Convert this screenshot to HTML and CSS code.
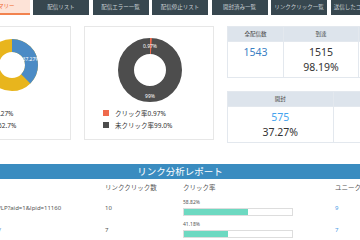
FILE: index.html
```html
<!DOCTYPE html>
<html lang="ja">

<head>
    <meta charset="UTF-8">
    <meta name="viewport" content="width=device-width, initial-scale=1.0">
    <title>配信レポート</title>
    <link rel="stylesheet" href="styles.css">
</head>

<body>
    <div class="page">
        <ul class="tabs">
            <li class="tab active">サマリー</li>
            <li class="tab">配信リスト</li>
            <li class="tab">配信エラー一覧</li>
            <li class="tab">配信停止リスト</li>
            <li class="tab">開封済み一覧</li>
            <li class="tab">リンククリック一覧</li>
            <li class="tab">送信したコンテンツ</li>
        </ul>

        <div class="overview">
            <!-- 開封率 -->
            <div class="card">
                <svg class="chart" width="128" height="80" viewBox="0 0 128 80">
                    <circle cx="70" cy="38" r="19.5" fill="none" stroke="#e8b51d" stroke-width="13" />
                    <circle cx="70" cy="38" r="19.5" fill="none" stroke="#4b8bc5" stroke-width="13"
                        stroke-dasharray="45.66 122.52" transform="rotate(-90 70 38)" />
                    <text class="chart-label" x="89" y="34">37.27%</text>
                </svg>
                <ul class="legend">
                    <li><span class="swatch" style="background:#4b8bc5"></span>開封率37.27%</li>
                    <li><span class="swatch" style="background:#e8b51d"></span>未開封率62.7%</li>
                </ul>
            </div>

            <!-- クリック率 -->
            <div class="card">
                <svg class="chart" width="128" height="80" viewBox="0 0 128 80">
                    <circle cx="65" cy="43" r="24" fill="none" stroke="#4d4d4d" stroke-width="16" />
                    <circle cx="65" cy="43" r="24" fill="none" stroke="#ef6a4c" stroke-width="16"
                        stroke-dasharray="1.46 150.8" transform="rotate(-90 65 43)" />
                    <text class="chart-label" x="65" y="21">0.97%</text>
                    <text class="chart-label" x="65" y="71">99%</text>
                </svg>
                <ul class="legend">
                    <li><span class="swatch" style="background:#ef6a4c"></span>クリック率0.97%</li>
                    <li><span class="swatch" style="background:#4d4d4d"></span>未クリック率99.0%</li>
                </ul>
            </div>

            <div class="stats">
                <table class="stat stat-a">
                    <tr>
                        <th>全配信数</th>
                        <th>到達</th>
                        <th>エラー</th>
                    </tr>
                    <tr>
                        <td><span class="num-blue">1543</span></td>
                        <td>1515<br>98.19%</td>
                        <td>28<br>1.81%</td>
                    </tr>
                </table>
                <table class="stat stat-b">
                    <tr>
                        <th>開封</th>
                        <th>クリック</th>
                    </tr>
                    <tr>
                        <td><span class="num-light">575</span><br>37.27%</td>
                        <td>15<br>0.97%</td>
                    </tr>
                </table>
            </div>
        </div>

        <div class="report">
            <h2 class="report-title">リンク分析レポート</h2>
            <div class="report-table">
                <div class="head url">URL</div>
                <div class="head">リンククリック数</div>
                <div class="head">クリック率</div>
                <div class="head">ユニーククリック数</div>

                <div class="cell url">https://www.test.jp/LP?aid=1&amp;lpid=11160</div>
                <div class="cell">10</div>
                <div class="cell rate">
                    <span class="rate-label">58.82%</span>
                    <div class="bar"><div class="bar-fill" style="width:58.82%"></div></div>
                </div>
                <div class="cell unique">9</div>

                <div class="cell url"><a class="link" href="#">https://www.test.jp/</a></div>
                <div class="cell">7</div>
                <div class="cell rate">
                    <span class="rate-label">41.18%</span>
                    <div class="bar"><div class="bar-fill" style="width:41.18%"></div></div>
                </div>
                <div class="cell unique">7</div>
            </div>
        </div>
    </div>
</body>

</html>
```

FILE: styles.css
```css
* {
    box-sizing: border-box;
}

body {
    margin: 0;
    overflow: hidden;
    font-family: "Noto Sans", "Noto Sans CJK JP", sans-serif;
    color: #333;
    background-color: #fff;
}

.page {
    width: 478px;
    margin-left: -59px;
}

/* タブ */
.tabs {
    display: flex;
    gap: 3.5px;
    margin: 0 0 0 32.5px;
    padding: 0;
    list-style: none;
}

.tab {
    flex: none;
    width: 56px;
    height: 15px;
    line-height: 15px;
    text-align: center;
    font-size: 5.5px;
    white-space: nowrap;
    overflow: hidden;
    background-color: #37474f;
    color: #c9d1d5;
}

.tab.active {
    padding-left: 4px;
    background-color: #fde3d7;
    color: #f0692f;
    border-bottom: 2px solid #f2834f;
    line-height: 13px;
}

/* 概要 */
.overview {
    display: flex;
    align-items: flex-start;
    gap: 13px;
    margin-top: 11px;
}

.card {
    flex: none;
    width: 130px;
    height: 114px;
    border: 1px solid #e7e7e7;
}

.chart {
    display: block;
}

.chart-label {
    font-size: 5px;
    fill: #fff;
    text-anchor: middle;
}

.legend {
    margin: 0;
    padding: 0 0 0 18px;
    list-style: none;
    font-size: 6.5px;
    white-space: nowrap;
}

.legend li {
    display: flex;
    align-items: center;
    gap: 6px;
    height: 12px;
}

.swatch {
    width: 6px;
    height: 6px;
}

.stats {
    display: flex;
    flex-direction: column;
    gap: 13px;
}

.stat {
    border-collapse: collapse;
    table-layout: fixed;
}

.stat-a {
    width: 206px;
}

.stat-a th:first-child {
    width: 56px;
}

.stat-a th:nth-child(2) {
    width: 75px;
}

.stat-b {
    width: 212px;
}

.stat th {
    height: 15px;
    padding: 0;
    font-size: 5.5px;
    font-weight: normal;
    color: #444;
    background-color: #dde4ec;
    border: 1px solid #e3e8ee;
}

.stat td {
    height: 36px;
    padding: 3px 0 0;
    vertical-align: top;
    text-align: center;
    font-size: 10.5px;
    line-height: 15px;
    border: 1px solid #e3e8ee;
}

.num-blue {
    color: #3b80c4;
}

.num-light {
    color: #45a4ee;
}

/* リンク分析レポート */
.report {
    margin-top: 21px;
}

.report-title {
    margin: 0;
    height: 15px;
    line-height: 15px;
    text-align: center;
    font-size: 9.5px;
    font-weight: normal;
    color: #fff;
    background-color: #3a8cc0;
}

.report-table {
    display: grid;
    grid-template-columns: 164px 78px 152px 1fr;
    font-size: 6.5px;
    color: #555;
}

.report-table .head {
    height: 18px;
    line-height: 18px;
}

.report-table .cell {
    display: flex;
    align-items: center;
    height: 22px;
    font-size: 6px;
    white-space: nowrap;
}

.url {
    padding-left: 4px;
}

.link {
    color: #3a7fc4;
    text-decoration: none;
}

.report-table .rate {
    flex-direction: column;
    align-items: flex-start;
    padding-top: 2px;
}

.rate-label {
    font-size: 5px;
    line-height: 6px;
}

.bar {
    width: 110px;
    height: 8px;
    margin-top: 3px;
    border: 1px solid #ddd;
}

.bar-fill {
    height: 100%;
    background-color: #6dd9c1;
}

.unique {
    color: #4ea0e6;
}
```
